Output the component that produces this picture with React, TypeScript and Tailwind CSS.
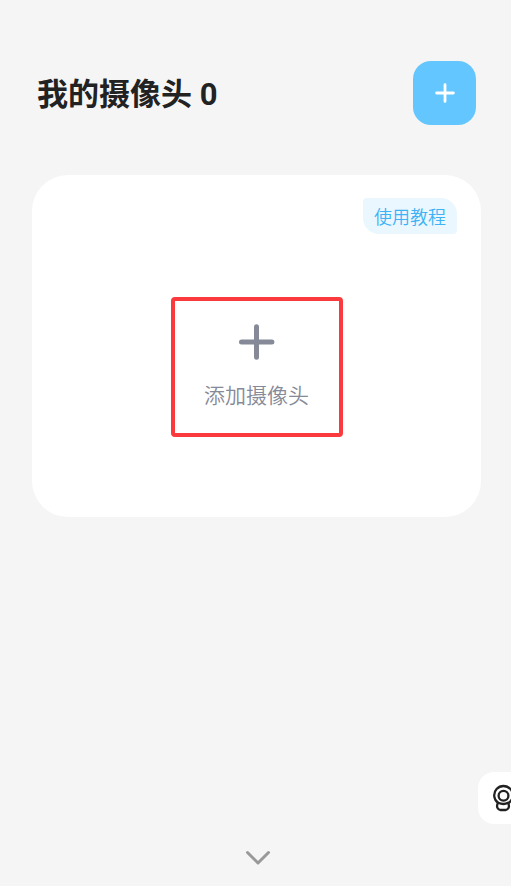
const AddCameraCard = () => {
  return (
    <section className="relative mt-[50px] flex h-[342px] items-center justify-center rounded-[36px] bg-white">
      <a
        href="#tutorial"
        className="absolute right-6 top-[23px] flex h-9 items-center rounded-bl-2xl rounded-br-sm rounded-tl-sm rounded-tr-2xl bg-[#eaf7ff] px-[11px] pt-1 text-[18px] font-[350] leading-6 text-[#3db2f5]"
      >
        使用教程
      </a>
      <button
        type="button"
        className="mt-[42px] flex h-[140px] w-[172px] flex-col items-center rounded border-4 border-[#fb3a3e] pt-[23px] text-[#868a98]"
      >
        <svg width="36" height="36" viewBox="0 0 36 36" fill="none" stroke="currentColor" strokeWidth="5" strokeLinecap="round">
          <path d="M17.5 2.8v30.4M2.5 18h30.4" />
        </svg>
        <span className="mt-5 text-[21px] font-[350] leading-8">添加摄像头</span>
      </button>
    </section>
  );
};

const App = () => {
  return (
    <div
      lang="zh-CN"
      className="relative flex min-h-screen flex-col overflow-hidden bg-[#f5f5f5] pl-8 pr-[30px] pt-[61px] font-['Roboto','Noto_Sans_CJK_SC',sans-serif]"
    >
      <header className="flex items-center justify-between px-[5px]">
        <h1 className="pt-1 text-[31px] font-bold leading-10 text-[#222222]">我的摄像头 0</h1>
        <button
          type="button"
          aria-label="添加"
          className="flex h-16 w-[63px] items-center justify-center rounded-[18px] bg-[#63c6ff] text-white"
        >
          <svg width="20" height="20" viewBox="0 0 20 20" fill="none" stroke="currentColor" strokeWidth="2.8" strokeLinecap="round">
            <path d="M10 1.6v16.8M1.6 10h16.8" />
          </svg>
        </button>
      </header>

      <AddCameraCard />

      {/* Floating camera entry, half hidden behind the screen edge */}
      <button
        type="button"
        aria-label="摄像头"
        className="absolute bottom-[62px] right-0 flex h-[52px] w-[33px] items-center overflow-hidden rounded-l-2xl bg-white pl-[14px] text-[#222222]"
      >
        <svg className="shrink-0" width="24" height="28" viewBox="0 0 24 28" fill="none" stroke="currentColor" strokeWidth="2.3" strokeLinecap="round" strokeLinejoin="round">
          <path d="M6 18.8A9.3 9.3 0 1 1 17 18.8" />
          <circle cx="11.5" cy="11.8" r="4.9" />
          <path d="M6 18.8C5 20.5 4.6 22 5.5 23.9 6.100 25.3 7 26 8.300 26h5.400c1.300 0 2.200-.7 2.800-2.100.9-1.900.5-3.400-.5-5.100-1.400.8-2.900 1.200-4.500 1.200s-3.600-.4-5.500-1.200z" />
        </svg>
      </button>

      <footer className="mt-auto flex justify-center pb-5">
        <button type="button" aria-label="展开" className="text-[#999999]">
          <svg className="block" width="28" height="16" viewBox="0 0 28 16" fill="none" stroke="currentColor" strokeWidth="3" strokeLinecap="round" strokeLinejoin="round">
            <path d="M4.500 2.500 15 13 25.500 2.500" />
          </svg>
        </button>
      </footer>
    </div>
  );
};

export default App;
